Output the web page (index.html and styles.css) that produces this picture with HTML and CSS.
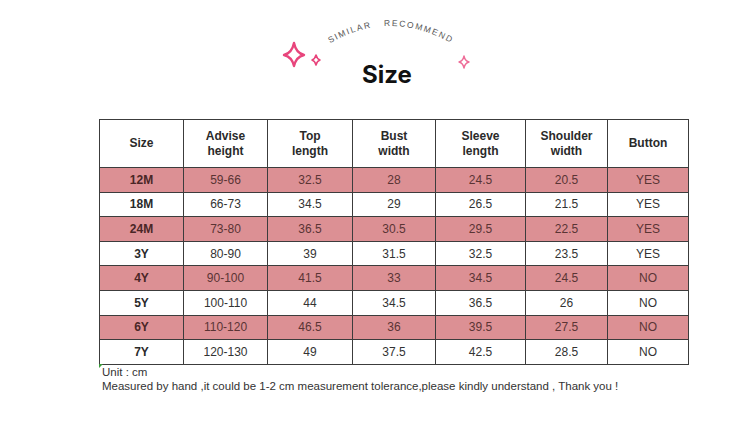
FILE: index.html
```html
<!DOCTYPE html>
<html>
<head>
<meta charset="utf-8">
<link rel="stylesheet" href="styles.css">
</head>
<body>
<div class="page">
  <header class="head">
    <svg class="deco" width="750" height="119" viewBox="0 0 750 119">
      <defs>
        <path id="arc" d="M 324 47 Q 389 5 458 47"/>
      </defs>
      <text class="arc-text"><textPath href="#arc" startOffset="50%" text-anchor="middle">SIMILAR   RECOMMEND</textPath></text>
      <path class="spark big" d="M294 43 Q296 53 304 55 Q296 57 294 66 Q292 57 284 55 Q292 53 294 43 Z"/>
      <path class="spark" d="M316 55 Q317 59 320 60 Q317 61 316 65 Q315 61 312 60 Q315 59 316 55 Z"/>
      <path class="spark thin" d="M464 56 Q465 61 469 62 Q465 63 464 68 Q463 63 459 62 Q463 61 464 56 Z"/>
    </svg>
    <h1 class="title">Size</h1>
  </header>

  <section class="chart">
    <table class="sizes">
      <colgroup>
        <col style="width:84px"><col style="width:84px"><col style="width:85px"><col style="width:83px"><col style="width:90px"><col style="width:82px"><col style="width:81px">
      </colgroup>
      <thead>
        <tr><th>Size</th><th>Advise<br>height</th><th>Top<br>length</th><th>Bust<br>width</th><th>Sleeve<br>length</th><th>Shoulder<br>width</th><th>Button</th></tr>
      </thead>
      <tbody>
        <tr class="pink"><td class="sz">12M</td><td>59-66</td><td>32.5</td><td>28</td><td>24.5</td><td>20.5</td><td>YES</td></tr>
        <tr><td class="sz">18M</td><td>66-73</td><td>34.5</td><td>29</td><td>26.5</td><td>21.5</td><td>YES</td></tr>
        <tr class="pink"><td class="sz">24M</td><td>73-80</td><td>36.5</td><td>30.5</td><td>29.5</td><td>22.5</td><td>YES</td></tr>
        <tr><td class="sz">3Y</td><td>80-90</td><td>39</td><td>31.5</td><td>32.5</td><td>23.5</td><td>YES</td></tr>
        <tr class="pink"><td class="sz">4Y</td><td>90-100</td><td>41.5</td><td>33</td><td>34.5</td><td>24.5</td><td>NO</td></tr>
        <tr><td class="sz">5Y</td><td>100-110</td><td>44</td><td>34.5</td><td>36.5</td><td>26</td><td>NO</td></tr>
        <tr class="pink"><td class="sz">6Y</td><td>110-120</td><td>46.5</td><td>36</td><td>39.5</td><td>27.5</td><td>NO</td></tr>
        <tr><td class="sz">7Y</td><td>120-130</td><td>49</td><td>37.5</td><td>42.5</td><td>28.5</td><td>NO</td></tr>
      </tbody>
    </table>
    <div class="notes">
      <p>Unit : cm</p>
      <p>Measured by hand ,it could be 1-2 cm measurement tolerance,please kindly understand , Thank you !</p>
    </div>
  </section>
</div>
</body>
</html>
```

FILE: styles.css
```css
html, body {
  margin: 0;
  padding: 0;
  background: #ffffff;
}
.page {
  width: 750px;
  height: 446px;
  overflow: hidden;
  font-family: "Liberation Sans", Arial, sans-serif;
  color: #333;
}
.head {
  position: relative;
  height: 119px;
  display: flex;
  justify-content: center;
  padding-left: 24px;
  box-sizing: border-box;
}
.deco {
  position: absolute;
  left: 0;
  top: 0;
}
.arc-text {
  font-family: "Liberation Sans", Arial, sans-serif;
  font-size: 8.5px;
  letter-spacing: 1.6px;
  fill: #555;
  white-space: pre;
}
.spark {
  fill: none;
  stroke: #e8457c;
  stroke-width: 1.6;
  stroke-linejoin: round;
}
.spark.big {
  stroke-width: 2.4;
}
.spark.thin {
  stroke: #ee6d98;
  stroke-width: 1.4;
}
.title {
  position: relative;
  margin: 60px 0 0 0;
  font-family: Inter, "Noto Sans", sans-serif;
  font-weight: 700;
  font-size: 24px;
  line-height: 30px;
  height: 30px;
  color: #111;
}
.chart {
  padding-left: 99px;
}
.sizes {
  border-collapse: collapse;
  table-layout: fixed;
  width: 589px;
  font-size: 12px;
  text-align: center;
}
.sizes th, .sizes td {
  border: 1px solid #3c3c3c;
  padding: 0;
}
.sizes th {
  height: 47px;
  font-weight: 700;
  color: #2a2a2a;
  line-height: 15px;
}
.sizes td {
  height: 23.6px;
  color: #333;
}
.sizes td.sz {
  font-weight: 700;
  color: #2a2a2a;
}
.sizes tr.pink td {
  background: #dc9094;
  color: #5a3434;
}
.sizes tr.pink td.sz {
  color: #4a2626;
}
.notes {
  position: relative;
  padding-left: 3px;
  font-size: 11.5px;
  line-height: 14px;
  color: #333;
}
.notes::before {
  content: "";
  position: absolute;
  left: 0;
  top: -1px;
  width: 0;
  height: 0;
  border-top: 4px solid #3a9a3a;
  border-right: 4px solid transparent;
}
.notes p {
  margin: 0;
}
```
